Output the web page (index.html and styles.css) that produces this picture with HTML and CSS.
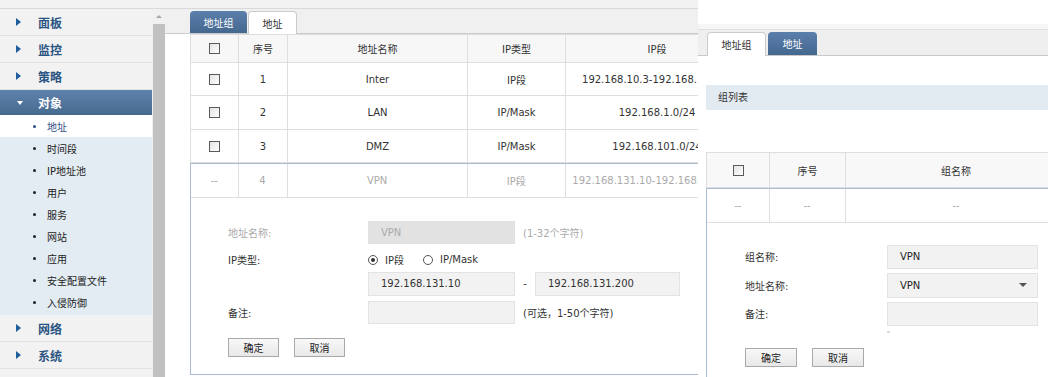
FILE: index.html
```html
<!DOCTYPE html>
<html lang="zh-CN">
<head>
    <meta charset="UTF-8" />
    <title>地址</title>
    <link rel="stylesheet" href="styles.css">
</head>
<body>
<div class="page">
    <div class="left">
        <div class="topstrip"></div>
        <div class="work">
            <ul class="menu">
                <li class="item"><span class="arrow"></span>面板</li>
                <li class="item"><span class="arrow"></span>监控</li>
                <li class="item"><span class="arrow"></span>策略</li>
                <li class="item open"><span class="arrow"></span>对象</li>
                <li class="subs">
                    <ul>
                        <li class="sub active"><span class="dot"></span>地址</li>
                        <li class="sub"><span class="dot"></span>时间段</li>
                        <li class="sub"><span class="dot"></span>IP地址池</li>
                        <li class="sub"><span class="dot"></span>用户</li>
                        <li class="sub"><span class="dot"></span>服务</li>
                        <li class="sub"><span class="dot"></span>网站</li>
                        <li class="sub"><span class="dot"></span>应用</li>
                        <li class="sub"><span class="dot"></span>安全配置文件</li>
                        <li class="sub"><span class="dot"></span>入侵防御</li>
                    </ul>
                </li>
                <li class="item"><span class="arrow"></span>网络</li>
                <li class="item"><span class="arrow"></span>系统</li>
            </ul>
            <div class="scrollbar">
                <div class="up"><span></span></div>
                <div class="thumb"></div>
            </div>
            <div class="main">
                <div class="tabbar">
                    <span class="tab w57">地址组</span>
                    <span class="tab current w49">地址</span>
                </div>
                <div class="content">
                    <table class="grid">
                        <colgroup>
                            <col class="c1"><col class="c2"><col class="c3"><col class="c4"><col class="c5"><col class="c6">
                        </colgroup>
                        <tr class="head">
                            <td><span class="cb"></span></td>
                            <td>序号</td>
                            <td>地址名称</td>
                            <td>IP类型</td>
                            <td>IP段</td>
                            <td>备注</td>
                        </tr>
                        <tr>
                            <td><span class="cb"></span></td>
                            <td>1</td>
                            <td>Inter</td>
                            <td>IP段</td>
                            <td>192.168.10.3-192.168.10.100</td>
                            <td></td>
                        </tr>
                        <tr class="tall">
                            <td><span class="cb"></span></td>
                            <td>2</td>
                            <td>LAN</td>
                            <td>IP/Mask</td>
                            <td>192.168.1.0/24</td>
                            <td></td>
                        </tr>
                        <tr>
                            <td><span class="cb"></span></td>
                            <td>3</td>
                            <td>DMZ</td>
                            <td>IP/Mask</td>
                            <td>192.168.101.0/24</td>
                            <td></td>
                        </tr>
                    </table>
                    <div class="edit">
                        <table class="grid">
                            <colgroup>
                                <col class="c1e"><col class="c2"><col class="c3"><col class="c4"><col class="c5"><col class="c6">
                            </colgroup>
                            <tr class="muted">
                                <td>--</td>
                                <td>4</td>
                                <td>VPN</td>
                                <td>IP段</td>
                                <td>192.168.131.10-192.168.131.200</td>
                                <td></td>
                            </tr>
                        </table>
                        <div class="form">
                            <div class="frow r1">
                                <span class="flabel off">地址名称:</span>
                                <span class="field disabled">VPN</span>
                                <span class="hint off">(1-32个字符)</span>
                            </div>
                            <div class="frow r2">
                                <span class="flabel">IP类型:</span>
                                <span class="radio on"></span><span class="rlabel">IP段</span>
                                <span class="radio"></span><span class="rlabel">IP/Mask</span>
                            </div>
                            <div class="frow r3">
                                <span class="flabel"></span>
                                <span class="field">192.168.131.10</span>
                                <span class="dash">-</span>
                                <span class="field w145">192.168.131.200</span>
                            </div>
                            <div class="frow r4">
                                <span class="flabel">备注:</span>
                                <span class="field"></span>
                                <span class="hint">(可选，1-50个字符)</span>
                            </div>
                            <div class="buttons">
                                <span class="btn">确定</span>
                                <span class="btn">取消</span>
                            </div>
                        </div>
                    </div>
                </div>
            </div>
        </div>
    </div>

    <div class="right">
        <div class="rtabbar">
            <span class="tab current w59">地址组</span>
            <span class="tab w49">地址</span>
        </div>
        <div class="rbody">
            <div class="caption">组列表</div>
            <table class="grid rgrid">
                <colgroup>
                    <col class="r1c"><col class="r2c"><col class="r3c">
                </colgroup>
                <tr class="head rhead">
                    <td><span class="cb"></span></td>
                    <td>序号</td>
                    <td>组名称</td>
                </tr>
            </table>
            <div class="edit redit">
                <table class="grid rgrid">
                    <colgroup>
                        <col class="r1ce"><col class="r2c"><col class="r3c">
                    </colgroup>
                    <tr class="muted">
                        <td>--</td>
                        <td>--</td>
                        <td>--</td>
                    </tr>
                </table>
                <div class="rform">
                    <div class="frow g1">
                        <span class="flabel wide">组名称:</span>
                        <span class="field rf">VPN</span>
                    </div>
                    <div class="frow g2">
                        <span class="flabel wide">地址名称:</span>
                        <span class="field rf select">VPN<span class="caret"></span></span>
                    </div>
                    <div class="frow g3">
                        <span class="flabel wide">备注:</span>
                        <span class="field rf"></span>
                    </div>
                    <div class="tick"></div>
                    <div class="buttons">
                        <span class="btn w52">确定</span>
                        <span class="btn w52">取消</span>
                    </div>
                </div>
            </div>
        </div>
    </div>
</div>
</body>
</html>
```

FILE: styles.css
```css
* {
    box-sizing: border-box;
}

body {
    margin: 0;
    width: 1048px;
    height: 377px;
    overflow: hidden;
    background: #fff;
    font-family: "DejaVu Sans", "Noto Sans CJK SC", sans-serif;
    font-size: 10px;
    color: #333;
}

.page {
    display: flex;
    height: 377px;
}

/* left screen: menu + address table */
.left {
    width: 698px;
    display: flex;
    flex-direction: column;
}

.topstrip {
    height: 9px;
    background: #f2f2f2;
    border-bottom: 1px solid #d9d9d9;
}

.work {
    display: flex;
    flex: 1;
    min-height: 0;
}

.menu {
    width: 152px;
    margin: 0;
    padding: 0;
    list-style: none;
    background: #f2f2f2;
}

.item {
    height: 27px;
    display: flex;
    align-items: center;
    padding-left: 16px;
    border-bottom: 1px solid #e2e2e2;
    font-size: 12px;
    font-weight: bold;
    color: #2a5583;
}

.arrow {
    width: 0;
    height: 0;
    border-left: 5px solid #1f5d9c;
    border-top: 4px solid transparent;
    border-bottom: 4px solid transparent;
    margin-right: 17px;
}

.item.open {
    height: 25px;
    border-bottom: none;
    color: #fff;
    background: linear-gradient(#5f83ad, #46698f);
}

.item.open .arrow {
    border-left: 3.5px solid transparent;
    border-right: 3.5px solid transparent;
    border-top: 4px solid #fff;
    border-bottom: none;
    margin-left: 1px;
    margin-right: 15px;
}

.subs ul {
    list-style: none;
    margin: 0;
    padding: 0 0 2px;
    background: #e3ecf2;
}

.sub {
    height: 22px;
    display: flex;
    align-items: center;
    padding-left: 33px;
    color: #222;
}

.sub.active {
    background: #fff;
    color: #2f4f86;
}

.dot {
    width: 3px;
    height: 3px;
    border-radius: 50%;
    background: #222;
    margin-right: 11px;
}

.sub.active .dot {
    background: #2f4f86;
}

.scrollbar {
    width: 13px;
    display: flex;
    flex-direction: column;
    background: #f1f1f1;
}

.up {
    height: 15px;
    display: flex;
    justify-content: center;
    align-items: center;
}

.up span {
    width: 0;
    height: 0;
    border-left: 3px solid transparent;
    border-right: 3px solid transparent;
    border-bottom: 3px solid #a8a8a8;
}

.thumb {
    flex: 1;
    margin-left: 1px;
    background: #c1c1c1;
}

.main {
    width: 533px;
    overflow: hidden;
}

.tabbar {
    height: 25px;
    display: flex;
    align-items: flex-end;
    gap: 1px;
    padding-left: 25px;
    background: #f0f0f0;
    border-bottom: 1px solid #cbcbcb;
}

.tab {
    height: 22px;
    display: flex;
    align-items: center;
    justify-content: center;
    border-radius: 4px 4px 0 0;
    background: linear-gradient(#5b7fab, #44688f);
    color: #fff;
}

.tab.current {
    height: 23px;
    margin-bottom: -1px;
    background: #fff;
    color: #333;
    border: 1px solid #cbcbcb;
    border-bottom: none;
}

.w49 { width: 49px; }
.w57 { width: 57px; }
.w59 { width: 59px; }

.content {
    padding-left: 25px;
}

/* tables */
.grid {
    width: 658px;
    table-layout: fixed;
    border-collapse: collapse;
}

.grid td {
    border: 1px solid #dedede;
    text-align: center;
    white-space: nowrap;
    overflow: hidden;
    height: 33px;
    padding: 0;
}

.grid tr.tall td {
    height: 34px;
}

.grid tr.head td {
    height: 28px;
    background: #f7f7f7;
}

.c1 { width: 48px; }
.c1e { width: 47px; }
.c2 { width: 49px; }
.c3 { width: 180px; }
.c4 { width: 98px; }
.c5 { width: 183px; }
.c6 { width: 100px; }

.cb {
    display: inline-block;
    width: 11px;
    height: 11px;
    border: 1px solid #5a5a5a;
    background: linear-gradient(135deg, #e4e4e4, #fff);
    vertical-align: middle;
}

.edit {
    width: 658px;
    border: 1px solid #a9bcd3;
}

.edit .grid td {
    border-top: none;
    height: 33px;
}

.edit .grid td:first-child {
    border-left: none;
}

.muted td {
    color: #aaa;
}

.form {
    padding: 23px 0 17px 37px;
}

.frow {
    display: flex;
    align-items: center;
}

.flabel {
    width: 140px;
}

.off {
    color: #aaa;
}

.field {
    width: 147px;
    height: 23px;
    display: flex;
    align-items: center;
    padding-left: 12px;
    background: #f2f2f2;
    border: 1px solid #e3e3e3;
}

.field.disabled {
    background: #e2e2e2;
    border-color: #e2e2e2;
    color: #aaa;
}

.w145 {
    width: 145px;
}

.hint {
    margin-left: 8px;
}

.r1 { margin-bottom: 5px; }
.r2 { height: 22px; margin-bottom: 1px; }
.r3 { margin-bottom: 5px; }
.r3 .field { height: 24px; }
.r4 { margin-bottom: 14px; }

.radio {
    width: 10px;
    height: 10px;
    border: 1px solid #555;
    border-radius: 50%;
    background: #fff;
    margin-right: 7px;
    display: flex;
    align-items: center;
    justify-content: center;
}

.radio.on::after {
    content: "";
    width: 4px;
    height: 4px;
    border-radius: 50%;
    background: #333;
}

.rlabel {
    margin-right: 19px;
}

.dash {
    width: 20px;
    text-align: center;
}

.buttons {
    display: flex;
    gap: 15px;
}

.btn {
    width: 51px;
    height: 19px;
    display: flex;
    align-items: center;
    justify-content: center;
    border: 1px solid #a9a9a9;
    background: linear-gradient(#f8f8f8, #e8e8e8);
    color: #222;
}

.w52 {
    width: 52px;
}

/* right screen: address groups */
.right {
    width: 350px;
    padding-top: 24px;
    overflow: hidden;
}

.rtabbar {
    height: 32px;
    display: flex;
    align-items: flex-end;
    gap: 2px;
    padding-left: 9px;
    background: linear-gradient(#f6f6f6 0 5px, #dfdfdf 5px 6px, #efefef 6px);
    border-bottom: 1px solid #c9c9c9;
}

.rtabbar .tab.current {
    height: 24px;
}

.rtabbar .tab {
    height: 23px;
}

.rbody {
    padding-left: 8px;
}

.caption {
    margin-top: 29px;
    height: 25px;
    line-height: 25px;
    padding-left: 12px;
    background: #e3ebf2;
}

.rgrid {
    width: 360px;
}

.rhead {
    margin-top: 0;
}

.rbody > .rgrid {
    margin-top: 42px;
}

.grid tr.rhead td {
    height: 35px;
    background: #f8f8f8;
}

.r1c { width: 63px; }
.r1ce { width: 62px; }
.r2c { width: 76px; }
.r3c { width: 221px; }

.redit {
    width: 360px;
    height: 200px;
}

.rform {
    padding: 22px 0 0 38px;
}

.flabel.wide {
    width: 142px;
}

.field.rf {
    width: 151px;
    height: 24px;
    color: #222;
}

.g1 { margin-bottom: 4px; }
.g2 { margin-bottom: 4px; }
.g2 .field { height: 25px; }

.select {
    justify-content: space-between;
    padding-right: 10px;
}

.caret {
    width: 0;
    height: 0;
    border-left: 4px solid transparent;
    border-right: 4px solid transparent;
    border-top: 4px solid #555;
}

.tick {
    width: 3px;
    height: 2px;
    margin: 5px 0 15px 142px;
    background: #ddd;
}
```
